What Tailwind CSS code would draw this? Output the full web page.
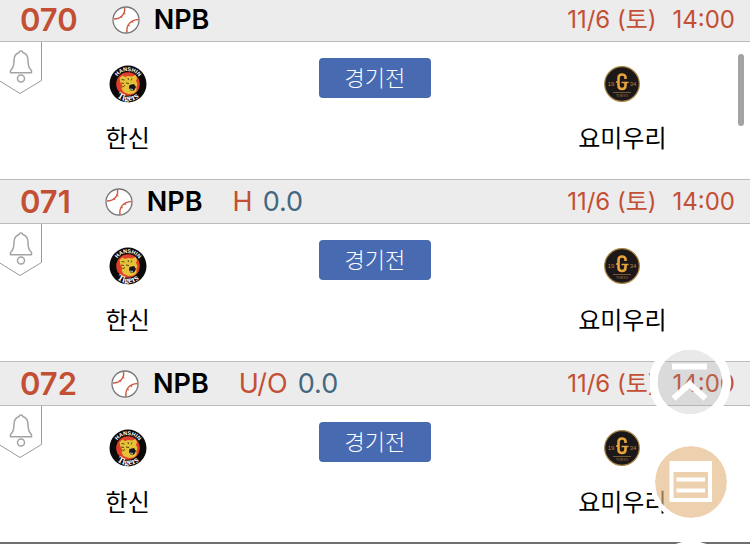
<!DOCTYPE html>
<html lang="ko">
<head>
  <meta charset="UTF-8">
  <meta name="viewport" content="width=device-width, initial-scale=1.0">
  <title>NPB 경기 일정</title>
  <script src="https://cdn.jsdelivr.net/npm/@tailwindcss/browser@4"></script>
</head>
<body class="bg-white text-black overflow-hidden font-['Inter','Noto_Sans_CJK_KR',sans-serif]">

  <!-- Shared icons -->
  <svg class="hidden" aria-hidden="true">
    <symbol id="ball" viewBox="0 0 28 28">
      <circle cx="14" cy="14" r="13" fill="#fff" stroke="#777" stroke-width="1.3"/>
      <path d="M12.500 2C13.500 7.500 9.500 12.800 2 13M26.500 13.500C18.500 14 14 19 15 26.500" fill="none" stroke="#cf5a43" stroke-width="1.5"/>
      <path d="M11 7l2.500 1M8.500 10l1.500 2M20 15l1 2M16 19l2 1" stroke="#cf5a43" stroke-width="1"/>
    </symbol>
    <symbol id="bell" viewBox="0 0 42 52">
      <path d="M41.500 -1V38.500L20 51.500L-1 38.500" fill="#fff" stroke="#999" stroke-width="1"/>
      <g fill="none" stroke="#a3a3a3" stroke-width="1.500" stroke-linejoin="round">
        <path d="M19.200 10.500C19.200 8.500 22.800 8.500 22.800 10.500C26.500 11.500 28 14.500 28 18.500C28 24 29 26.500 31.500 28.500V30.800H10.500V28.500C13 26.500 14 24 14 18.500C14 14.500 15.500 11.500 19.200 10.500Z"/>
        <circle cx="21" cy="36.500" r="3.500"/>
      </g>
    </symbol>
    <symbol id="tigers" viewBox="0 0 38 38">
      <circle cx="19" cy="19" r="18.500" fill="#0c0909"/>
      <circle cx="19" cy="19" r="11.800" fill="#e0402a"/>
      <path d="M10.500 13l3-2.500 2.500 1.500 3-1 4 .5 3.500-1.500 1.500 3-1 3 1.500 3-1 3 0 4-3 2.500-5 .5-5-2-2-3.500 1-2.500-2-3z" fill="#e6c238"/>
      <path d="M12.500 14.500l3 .5M12 18l3 .5M13.500 22l2.500-1.500M19 13l.5 2M23 13.500l-1 2M17 18l3 .5" stroke="#3a2808" stroke-width=".8" fill="none"/>
      <path d="M20.500 20l4.500-1 2 3-2 3.500-3.500 0-1.500-2.500z" fill="#17151c"/>
      <path d="M21 24l3 .5" stroke="#e8e8e8" stroke-width=".8"/>
      <path id="arcTop" d="M6 19A13 13 0 0 1 32 19" fill="none"/>
      <path id="arcBottom" d="M2 19A17 17 0 0 0 36 19" fill="none"/>
      <text font-family="Liberation Sans" font-size="5.500" font-weight="bold" fill="#fff" text-anchor="middle"><textPath href="#arcTop" startOffset="50%">HANSHIN</textPath></text>
      <text font-family="Liberation Serif" font-size="9" font-weight="bold" fill="#fff" text-anchor="middle"><textPath href="#arcBottom" startOffset="50%">Tigers</textPath></text>
    </symbol>
    <symbol id="giants" viewBox="0 0 38 38">
      <circle cx="19" cy="19" r="17.300" fill="#1c1718" stroke="#a58444" stroke-width="1.200"/>
      <path d="M22.500 14V12Q22 9.500 19 9.500Q15.500 9.500 15.500 13V20.500Q15.500 24 19 24Q22.500 24 22.500 20.500V18" fill="none" stroke="#e5a53c" stroke-width="2.600"/>
      <path d="M18.500 17.500H25.500M13 17H16" stroke="#e5a53c" stroke-width="1.500"/>
      <path d="M10 27.500H28" stroke="#8d6a32" stroke-width=".8"/>
      <g font-family="Liberation Sans" fill="#b08340" text-anchor="middle">
        <text x="8" y="20.500" font-size="6">19</text>
        <text x="30" y="20.500" font-size="6">34</text>
        <text x="19" y="31.500" font-size="3.500">TOKYO</text>
      </g>
    </symbol>
  </svg>

  <main>
    <!-- 070 -->
    <section>
      <header class="flex items-center h-[42px] pl-5 pr-[15px] pb-0.5 bg-[#ececec] border-b border-[#bcbcbc]">
        <h2 class="text-[31px] leading-9 font-semibold text-[#c34f34]">070</h2>
        <svg class="size-7 ml-[34px]"><use href="#ball"/></svg>
        <span class="ml-3.5 text-[27px] leading-9 font-semibold">NPB</span>
        <time class="ml-auto flex gap-4 text-2xl text-[#c34f34]"><span>11/6 (토)</span><span>14:00</span></time>
      </header>
      <div class="relative grid grid-cols-3 justify-items-center h-[137px] px-1 pt-4">
        <button class="absolute left-0 top-0" aria-label="알림"><svg class="w-[42px] h-[52px]"><use href="#bell"/></svg></button>
        <div class="flex flex-col items-center pt-[7px]">
          <svg class="size-[38px]"><use href="#tigers"/></svg>
          <span class="mt-5 text-2xl">한신</span>
        </div>
        <span class="flex items-center justify-center w-28 h-10 rounded-sm bg-[#486ab1] text-white text-[22px] font-light">경기전</span>
        <div class="flex flex-col items-center pt-[7px]">
          <svg class="size-[38px]"><use href="#giants"/></svg>
          <span class="mt-5 text-2xl">요미우리</span>
        </div>
      </div>
    </section>

    <!-- 071 -->
    <section>
      <header class="flex items-center h-[45px] pl-5 pr-[15px] bg-[#ececec] border-y border-[#bcbcbc]">
        <h2 class="text-[31px] leading-9 font-semibold text-[#c34f34]">071</h2>
        <svg class="size-7 ml-[34px]"><use href="#ball"/></svg>
        <span class="ml-3.5 text-[27px] leading-9 font-semibold">NPB</span>
        <span class="ml-[30px] text-[27px] leading-9 text-[#c34f34]">H</span>
        <span class="ml-2.5 text-[27px] leading-9 text-[#42677f]">0.0</span>
        <time class="ml-auto flex gap-4 text-2xl text-[#c34f34]"><span>11/6 (토)</span><span>14:00</span></time>
      </header>
      <div class="relative grid grid-cols-3 justify-items-center h-[137px] px-1 pt-4">
        <button class="absolute left-0 top-0" aria-label="알림"><svg class="w-[42px] h-[52px]"><use href="#bell"/></svg></button>
        <div class="flex flex-col items-center pt-[7px]">
          <svg class="size-[38px]"><use href="#tigers"/></svg>
          <span class="mt-5 text-2xl">한신</span>
        </div>
        <span class="flex items-center justify-center w-28 h-10 rounded-sm bg-[#486ab1] text-white text-[22px] font-light">경기전</span>
        <div class="flex flex-col items-center pt-[7px]">
          <svg class="size-[38px]"><use href="#giants"/></svg>
          <span class="mt-5 text-2xl">요미우리</span>
        </div>
      </div>
    </section>

    <!-- 072 -->
    <section class="border-b-2 border-[#6f6d6f]">
      <header class="flex items-center h-[45px] pl-5 pr-[15px] bg-[#ececec] border-y border-[#bcbcbc]">
        <h2 class="text-[31px] leading-9 font-semibold text-[#c34f34]">072</h2>
        <svg class="size-7 ml-[34px]"><use href="#ball"/></svg>
        <span class="ml-3.5 text-[27px] leading-9 font-semibold">NPB</span>
        <span class="ml-[30px] text-[27px] leading-9 text-[#c34f34]">U/O</span>
        <span class="ml-2.5 text-[27px] leading-9 text-[#42677f]">0.0</span>
        <time class="ml-auto flex gap-4 text-2xl text-[#c34f34]"><span>11/6 (토)</span><span>14:00</span></time>
      </header>
      <div class="relative grid grid-cols-3 justify-items-center h-[136px] px-1 pt-4">
        <button class="absolute left-0 top-0" aria-label="알림"><svg class="w-[42px] h-[52px]"><use href="#bell"/></svg></button>
        <div class="flex flex-col items-center pt-[7px]">
          <svg class="size-[38px]"><use href="#tigers"/></svg>
          <span class="mt-5 text-2xl">한신</span>
        </div>
        <span class="flex items-center justify-center w-28 h-10 rounded-sm bg-[#486ab1] text-white text-[22px] font-light">경기전</span>
        <div class="flex flex-col items-center pt-[7px]">
          <svg class="size-[38px]"><use href="#giants"/></svg>
          <span class="mt-5 text-2xl">요미우리</span>
        </div>
      </div>
    </section>
  </main>

  <!-- Scroll thumb -->
  <div class="fixed right-1.5 top-[54px] w-1.5 h-[72px] rounded-full bg-[#a3a3a3]"></div>

  <!-- Floating buttons -->
  <div class="fixed right-[18px] top-[341px] flex flex-col gap-[18px]">
    <button aria-label="맨 위로">
      <svg class="size-[82px]" viewBox="0 0 82 82">
        <circle cx="40" cy="41" r="32.500" fill="#999" fill-opacity=".22"/>
        <circle cx="40" cy="41" r="36.700" fill="none" stroke="#fff" stroke-width="8.500"/>
        <path d="M22 25.500H57M23.500 57.500L39.500 43L55.500 57.500" fill="none" stroke="#fff" stroke-width="6"/>
      </svg>
    </button>
    <button aria-label="구매 목록">
      <svg class="size-[82px]" viewBox="0 0 82 82">
        <circle cx="41" cy="41" r="36" fill="#e3b884" fill-opacity=".65"/>
        <circle cx="41" cy="41" r="38.500" fill="none" stroke="#fff" stroke-width="5"/>
        <path d="M19.500 20H62V61H19.500ZM23.500 31V57H58V31Z" fill="#fff" fill-rule="evenodd"/>
        <path d="M26.500 38.500H55M26.500 49.500H55" stroke="#fff" stroke-width="4"/>
      </svg>
    </button>
    <button aria-label="메뉴">
      <svg class="size-[82px]" viewBox="0 0 82 82">
        <circle cx="41" cy="41" r="41" fill="#fff"/>
      </svg>
    </button>
  </div>
</body>
</html>
